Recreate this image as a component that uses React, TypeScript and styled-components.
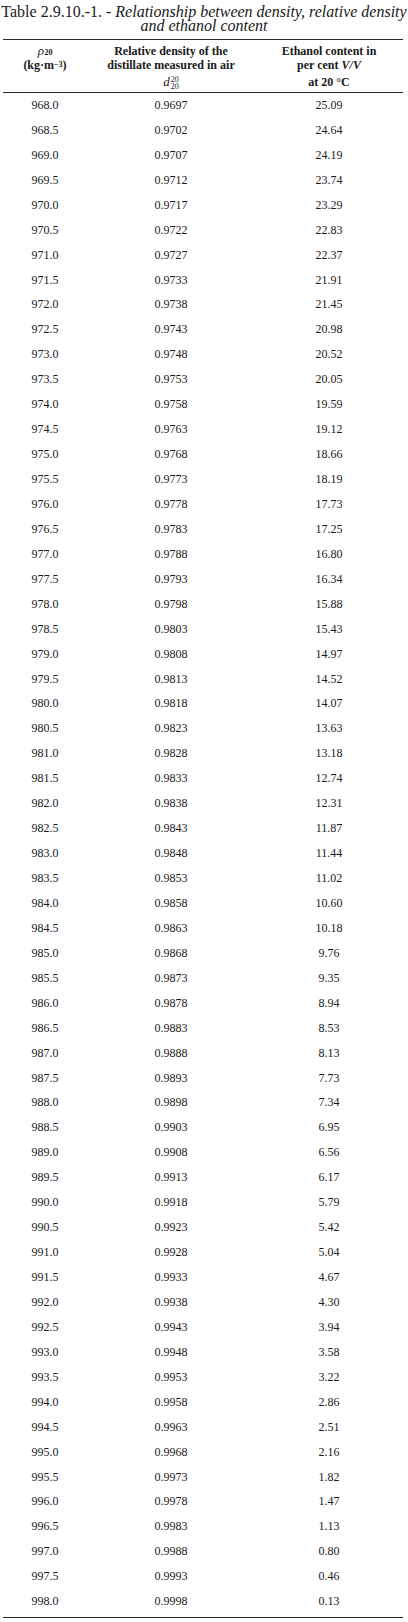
import React from "react";
import styled, { createGlobalStyle } from "styled-components";

const Global = createGlobalStyle`
  html, body { margin: 0; padding: 0; background: #ffffff; }
  body { font-family: "Liberation Serif", "Times New Roman", serif; color: #1a1a1a; }
`;

const Page = styled.div`
  width: 408px;
  padding: 0 5px 0 3px;
  box-sizing: border-box;
`;

const Caption = styled.div`
  font-size: 16px;
  line-height: 14px;
  text-align: center;
  padding-top: 4.5px;
  margin-bottom: 6px;
  color: #1a1a1a;
  white-space: nowrap;
  margin-left: -3px;
  margin-right: -5px;
`;

const Em = styled.i`
  font-style: italic;
`;

const Table = styled.div`
  display: grid;
  grid-template-columns: 84px 168px 148px;
  grid-auto-rows: auto;
  border-top: 1.5px solid #2a2a2a;
  border-bottom: 1.5px solid #2a2a2a;
  padding-bottom: 3px;
`;

const HeadCell = styled.div`
  height: 53.5px;
  padding-top: 4px;
  box-sizing: border-box;
  display: flex;
  flex-direction: column;
  align-items: center;
  font-weight: bold;
  font-size: 12px;
  line-height: 14.5px;
  text-align: center;
  border-bottom: 1.5px solid #2a2a2a;
`;

const HeadLine = styled.div<{ $mt?: number }>`
  white-space: nowrap;
  display: flex;
  align-items: center;
  justify-content: center;
  margin-top: ${(p) => p.$mt ?? 0}px;
`;

const Sym = styled.span`
  font-style: italic;
  font-weight: normal;
  font-size: 13px;
`;

const Sub = styled.span`
  font-size: 8px;
  line-height: 8px;
  align-self: flex-end;
  margin-bottom: 1px;
  margin-left: 0.5px;
`;

const Sup = styled.sup`
  font-size: 8px;
  vertical-align: 5px;
  line-height: 0;
`;

const Stack = styled.span`
  display: inline-flex;
  flex-direction: column;
  align-items: flex-start;
  font-size: 8px;
  line-height: 7.5px;
  font-weight: normal;
  margin-left: 1px;
  margin-top: 2px;
`;

const DataCell = styled.div`
  height: 24.95px;
  display: flex;
  align-items: center;
  justify-content: center;
  font-size: 12px;
  color: #1a1a1a;
`;

const density = Array.from({ length: 61 }, (_, i) => (968 + i * 0.5).toFixed(1));
const relDensity = Array.from({ length: 61 }, (_, i) =>
  (i < 7 ? 0.9697 + 0.0005 * i : 0.9698 + 0.0005 * i).toFixed(4)
);
const ethanol = [
  "25.09", "24.64", "24.19", "23.74", "23.29", "22.83", "22.37", "21.91", "21.45", "20.98",
  "20.52", "20.05", "19.59", "19.12", "18.66", "18.19", "17.73", "17.25", "16.80", "16.34",
  "15.88", "15.43", "14.97", "14.52", "14.07", "13.63", "13.18", "12.74", "12.31", "11.87",
  "11.44", "11.02", "10.60", "10.18", "9.76", "9.35", "8.94", "8.53", "8.13", "7.73",
  "7.34", "6.95", "6.56", "6.17", "5.79", "5.42", "5.04", "4.67", "4.30", "3.94",
  "3.58", "3.22", "2.86", "2.51", "2.16", "1.82", "1.47", "1.13", "0.80", "0.46", "0.13",
];

export default function App() {
  return (
    <>
      <Global />
      <Page>
        <Caption>
          Table 2.9.10.-1. - <Em>Relationship between density, relative density</Em>
          <br />
          <Em>and ethanol content</Em>
        </Caption>
        <Table>
          <HeadCell>
            <HeadLine>
              <Sym>ρ</Sym>
              <Sub>20</Sub>
            </HeadLine>
            <HeadLine>
              (kg·m<Sup>−3</Sup>)
            </HeadLine>
          </HeadCell>
          <HeadCell>
            <HeadLine>Relative density of the</HeadLine>
            <HeadLine>distillate measured in air</HeadLine>
            <HeadLine $mt={1}>
              <Sym>d</Sym>
              <Stack>
                <span>20</span>
                <span>20</span>
              </Stack>
            </HeadLine>
          </HeadCell>
          <HeadCell>
            <HeadLine>Ethanol content in</HeadLine>
            <HeadLine>
              per cent&nbsp;<i>V/V</i>
            </HeadLine>
            <HeadLine $mt={2}>at 20 °C</HeadLine>
          </HeadCell>
          {density.map((d, i) => (
            <React.Fragment key={d}>
              <DataCell>{d}</DataCell>
              <DataCell>{relDensity[i]}</DataCell>
              <DataCell>{ethanol[i]}</DataCell>
            </React.Fragment>
          ))}
        </Table>
      </Page>
    </>
  );
}
